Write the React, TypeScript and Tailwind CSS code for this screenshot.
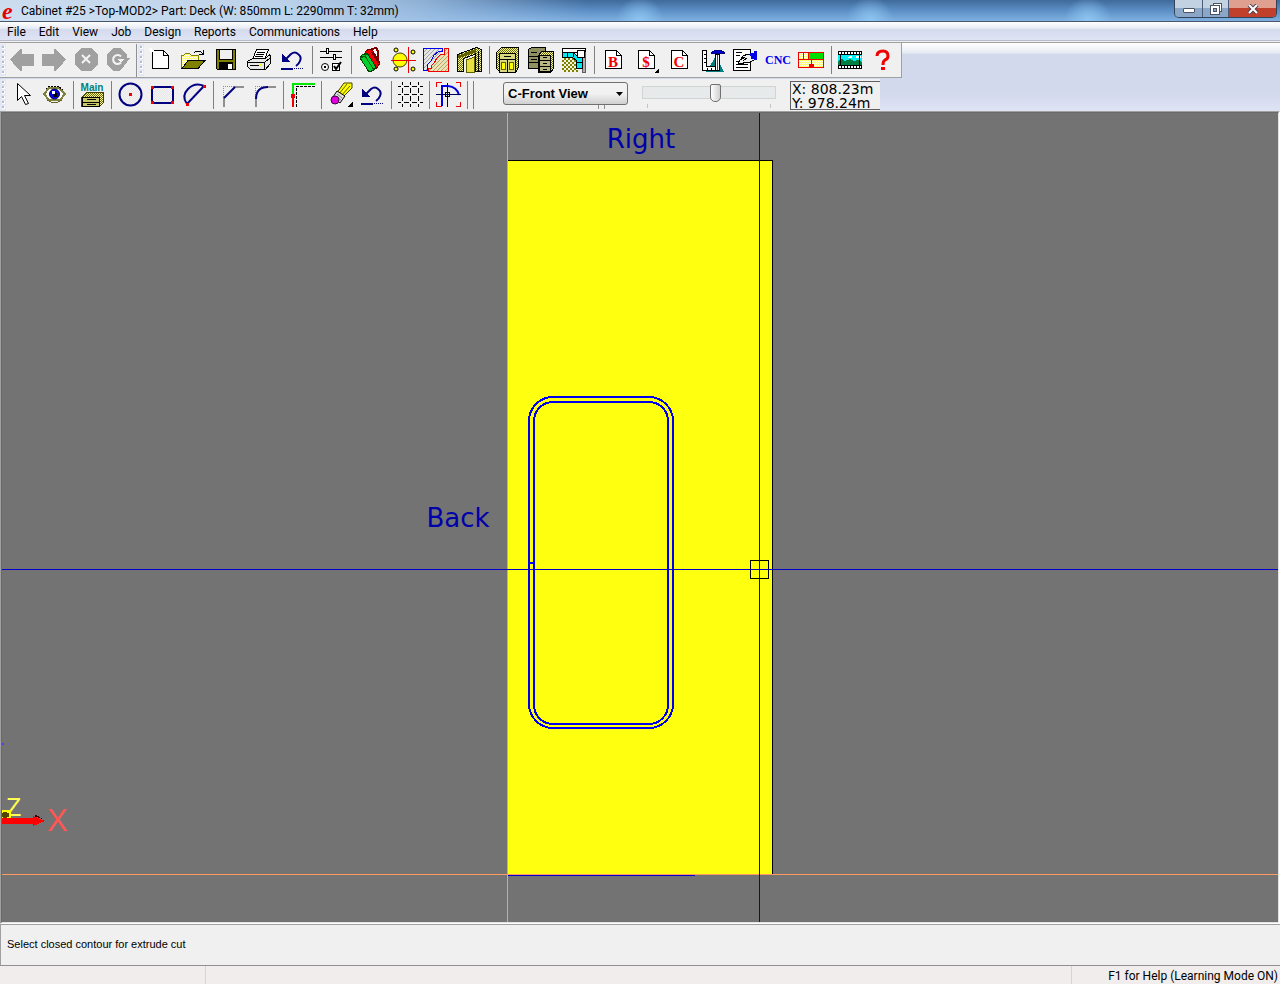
import clsx from "clsx";
import { ReactNode, useState } from "react";

const menus = [
	"File",
	"Edit",
	"View",
	"Job",
	"Design",
	"Reports",
	"Communications",
	"Help",
];

type ToolProps = {
	label: string;
	wide?: boolean;
	children: ReactNode;
};

// every glyph is drawn on a 32px grid
function Tool({ label, wide, children }: ToolProps) {
	return (
		<button
			type="button"
			aria-label={label}
			title={label}
			className={clsx(
				"flex h-8 shrink-0 items-center",
				wide ? "w-[33px]" : "w-8"
			)}
		>
			<svg
				viewBox="0 0 32 32"
				className="h-8 w-8"
				fill="none"
				shapeRendering="crispEdges"
			>
				{children}
			</svg>
		</button>
	);
}

function Separator() {
	return (
		<div className="flex h-8 w-[6px] shrink-0 justify-center py-[2px]">
			<div className="w-px bg-[#808080]" />
		</div>
	);
}

function Grip() {
	return (
		<div className="flex h-8 w-[6px] shrink-0 flex-col items-center justify-around bg-[#e3e8f4] py-px">
			{[0, 1, 2, 3, 4, 5].map((dot) => (
				<span
					key={dot}
					className="h-[3px] w-[3px] border-r border-b border-white bg-[#b4bccb]"
				/>
			))}
		</div>
	);
}

function Patterns() {
	return (
		<svg className="absolute h-0 w-0" aria-hidden="true">
			<defs>
				<pattern id="olive" width="2" height="2" patternUnits="userSpaceOnUse">
					<rect width="2" height="2" fill="#f4f4a0" />
					<path d="M0 0h1v1H0zM1 1h1v1H1z" fill="#6c6c00" />
				</pattern>
				<pattern id="lemon" width="2" height="2" patternUnits="userSpaceOnUse">
					<rect width="2" height="2" fill="#ffff66" />
					<path d="M0 0h1v1H0zM1 1h1v1H1z" fill="#fffff0" />
				</pattern>
				<pattern id="dither" width="2" height="2" patternUnits="userSpaceOnUse">
					<rect width="2" height="2" fill="#f4f4f4" />
					<path d="M0 0h1v1H0zM1 1h1v1H1z" fill="#e6e6e6" />
				</pattern>
				<pattern id="hatch" width="4" height="4" patternUnits="userSpaceOnUse">
					<rect width="4" height="4" fill="#e6e6e6" />
					<path d="M0 3h1v1H0zM1 2h1v1H1zM2 1h1v1H2zM3 0h1v1H3z" fill="#a0a0a0" />
				</pattern>
				<pattern id="wood" width="4" height="4" patternUnits="userSpaceOnUse">
					<rect width="4" height="4" fill="#e8e4b8" />
					<path d="M0 3h1v1H0zM1 2h1v1H1zM2 1h1v1H2zM3 0h1v1H3z" fill="#b8a460" />
				</pattern>
				<pattern id="checker" width="4" height="4" patternUnits="userSpaceOnUse">
					<rect width="4" height="4" fill="#f4f4e0" />
					<path d="M0 0h2v2H0zM2 2h2v2H2z" fill="#808000" />
				</pattern>
			</defs>
		</svg>
	);
}

function Sheet({ letter }: { letter?: string }) {
	return (
		<>
			<path d="M8.500 6.500h11l5 5v13h-16z" fill="#fff" stroke="#000" />
			<path d="M19.500 6.500v5h5" stroke="#000" />
			{letter && (
				<text
					x="16"
					y="23"
					textAnchor="middle"
					className="fill-[#f00000] font-['Liberation_Serif',serif] text-[15px] font-bold"
				>
					{letter}
				</text>
			)}
		</>
	);
}

function UndoGlyph() {
	return (
		<>
			<path
				d="M10 15l5-5q4-3 7 0q4 3 2 7q-1 3-4 5"
				stroke="#000080"
				strokeWidth="2"
				shapeRendering="auto"
			/>
			<path d="M6 10v8h8z" fill="#000080" />
			<path d="M5 24h12v2H5z" fill="#000080" />
			<path d="M18 24.500h9" stroke="#000080" strokeDasharray="1 1" />
		</>
	);
}

function MainToolbar() {
	return (
		<div className="flex h-[35px] w-[902px] border-r border-b border-[#a0a0a0] bg-[#f0f0f0] pt-px">
			<div className="flex w-[137px] border-r border-[#909090]">
				<Grip />
				<Tool label="Back">
					<path d="M4 15.500L14 5h2v5h12v12H16v5h-2z" fill="#a0a0a0" />
				</Tool>
				<Tool label="Forward">
					<path d="M28 15.500L18 5h-2v5H4v12h12v5h2z" fill="#a0a0a0" />
				</Tool>
				<Tool label="Stop">
					<path d="M11 4h10l7 7v9l-7 7H11l-6-7v-9z" fill="#a0a0a0" />
					<path d="M12 11l8 8M20 11l-8 8" stroke="#f4f4f4" strokeWidth="2" shapeRendering="auto" />
				</Tool>
				<Tool label="Refresh">
					<path d="M11 4h8l6 7v3h3l-6 8l-4 5h-7l-6-7v-9z" fill="#a0a0a0" />
					<path d="M19 12.500a4.500 4.500 0 1 0 0 6" stroke="#f4f4f4" strokeWidth="2" shapeRendering="auto" />
					<path d="M16 15h6l-3 4z" fill="#f4f4f4" />
				</Tool>
			</div>
			<div className="flex pl-px">
				<Grip />
				<Tool wide label="New">
					<Sheet />
					<path d="M5 6.500h5M7.500 4v5M5 4l5 5" stroke="#fff" />
				</Tool>
				<Tool wide label="Open">
					<path d="M4.500 24.500v-13h2l2-2h4l2 2h7v4" fill="url(#lemon)" stroke="#808000" />
					<path d="M5 24.500l6-8h17l-7 8z" fill="#808000" stroke="#000" />
					<path d="M17 9l2-2h4l3 3M26.500 6v4.500H22" stroke="#000" />
				</Tool>
				<Tool wide label="Save">
					<path d="M6.500 5.500h19v20h-18l-1-1z" fill="#808000" stroke="#000" />
					<rect x="10" y="6" width="12" height="9" fill="#f0f0f0" />
					<path d="M9.500 6v9.500h13V6" stroke="#000" />
					<rect x="9" y="18" width="14" height="8" fill="#000" />
					<rect x="18" y="20" width="4" height="5" fill="#fff" />
				</Tool>
				<Tool wide label="Print">
					<path d="M9.500 15.500l4-10h12l-4 10z" fill="#fff" stroke="#000" />
					<path d="M14 8.500h8M13 10.500h8M12 12.500h8" stroke="#000" />
					<path d="M4.500 17.500l5-3h13l4-4l1 2v7l-5 6h-15l-3-3z" fill="#e8e8e8" stroke="#000" />
					<path d="M4.500 18.500h17v7M21.500 18.500l6-5" stroke="#000" />
					<path d="M7 21.500h12" stroke="#000" />
					<rect x="16" y="20" width="3" height="2" fill="#ffff00" />
				</Tool>
				<Tool wide label="Undo">
					<UndoGlyph />
				</Tool>
				<Separator />
				<Tool wide label="Options">
					<path d="M5 7.500h22M5 13.500h22" stroke="#000" />
					<rect x="11.500" y="4.500" width="2" height="5" fill="#fff" stroke="#000" />
					<rect x="18.500" y="10.500" width="2" height="5" fill="#fff" stroke="#000" />
					<circle cx="10" cy="23" r="3.500" fill="#fff" stroke="#000" shapeRendering="auto" />
					<rect x="9" y="22" width="2" height="2" fill="#000" />
					<rect x="17.500" y="19.500" width="7" height="7" fill="#fff" stroke="#000" />
					<path d="M19 22l2 3l5-7" stroke="#000" strokeWidth="2" shapeRendering="auto" />
				</Tool>
				<Separator />
				<Tool wide label="Catalog">
					<path d="M16 8l2-3l4-1l2 3v8" fill="#fff" stroke="#800000" strokeWidth="2" />
					<path d="M11 8l4-3l4 2l7 12l-4 6z" fill="#f00000" stroke="#700000" />
					<path d="M18 8l7 11" stroke="#700000" strokeWidth="2" />
					<path d="M6 14l2-3l5-2l9 14l-2 3l-5 2z" fill="#00d030" stroke="#004000" />
					<path d="M6 14l5-2l9 14M11 12l2-3" stroke="#006010" />
				</Tool>
				<Tool wide label="Light">
					<circle cx="13" cy="16" r="7" fill="#ffff00" stroke="#404000" shapeRendering="auto" />
					<g fill="#ffff00" stroke="#000" shapeRendering="auto">
						<circle cx="9" cy="6" r="2" />
						<circle cx="9" cy="25" r="2" />
						<circle cx="26" cy="8" r="2" />
						<circle cx="26" cy="25" r="2" />
					</g>
					<path d="M4 16.500h25M21.500 3v26" stroke="#f00000" />
				</Tool>
				<Tool wide label="Profile">
					<path d="M3.500 4.500h21L15 17L3.500 26z" fill="url(#hatch)" />
					<path d="M8.500 27.500v-3h3v-3l3-3l2-4l4-4h4v-6h4v23z" fill="url(#wood)" stroke="#f00000" />
					<path d="M3.500 26.500v-22h19v3h-4l-5 4l-2 5l-4 4v6z" fill="url(#hatch)" stroke="#0000f0" />
				</Tool>
				<Tool wide label="Doors">
					<path d="M4.500 27.500v-17l19-7l5 2v22h-6V10L10.500 14.500v13z" fill="url(#olive)" stroke="#000" />
					<path d="M4 12l19-7v3L7 14z" fill="#606000" />
					<path d="M13.500 28V16l8-3v15z" fill="#e8e040" stroke="#606000" />
					<path d="M25.500 7v21" stroke="#000" />
				</Tool>
				<Separator />
				<Tool wide label="Base cabinet">
					<path d="M4.500 8.500l5-5h17v20l-3 5h-15l-4-4z" fill="url(#olive)" stroke="#000" />
					<rect x="7.500" y="9.500" width="16" height="19" fill="#d8d880" stroke="#000" />
					<path d="M7 15.500h17M15.500 16v12M12 12.500h7" stroke="#000" />
					<rect x="9.500" y="18.500" width="4" height="7" fill="#ffff00" stroke="#606000" />
					<rect x="17.500" y="18.500" width="4" height="7" fill="#ffff00" stroke="#606000" />
				</Tool>
				<Tool wide label="Cabinet group">
					<path d="M3.500 5.500l3-2h14v21h-17z" fill="#909060" stroke="#000" />
					<path d="M4 12.500h10M4 18.500h10M6 8.500h6M6 15.500h6" stroke="#000" />
					<path d="M13.500 11.500l3-4h12v17l-3 4h-12z" fill="url(#olive)" stroke="#000" />
					<rect x="14.500" y="11.500" width="11" height="16" fill="#b8b880" stroke="#000" />
					<path d="M14 16.500h12M14 22.500h12M18 13.500h4M18 19.500h4M18 25.500h4" stroke="#000" />
				</Tool>
				<Tool wide label="Counter top">
					<rect x="4" y="13" width="16" height="15" fill="url(#checker)" />
					<rect x="4.500" y="4.500" width="23" height="4" fill="#fff" stroke="#000" />
					<path d="M24.500 8v20h3V8" fill="#b0b0b0" stroke="#606060" />
					<path d="M4.500 8.500h11l4 4h5v12h-6v-8l-4-3h-10z" fill="#00e8f0" stroke="#000" />
					<rect x="19.500" y="6.500" width="7" height="7" fill="#fff" stroke="#000" />
					<path d="M9.500 9v4M15.500 9v4M18 18.500h6" stroke="#000" />
				</Tool>
				<Separator />
				<Tool wide label="Bill of materials">
					<Sheet letter="B" />
				</Tool>
				<Tool wide label="Price">
					<Sheet letter="$" />
					<path d="M29 24v5h-5z" fill="#000" />
				</Tool>
				<Tool wide label="Cut list">
					<Sheet letter="C" />
				</Tool>
				<Tool wide label="Shop drawings">
					<path d="M10 28L20 12l8 16z" fill="#008080" />
					<path d="M6.500 6.500h4v16h9v4h-13z" fill="#fff" stroke="#000" />
					<path d="M8 10.500h2M8 14.500h2M8 18.500h2M11.500 24v2M15.500 24v2" stroke="#000" />
					<path d="M15.500 8.500l3-2h6l4 2v1h-13z" fill="#0000d0" stroke="#000080" />
					<rect x="19.500" y="10.500" width="4" height="16" fill="#fff" stroke="#000" />
					<path d="M21.500 11v15" stroke="#f00000" />
				</Tool>
				<Tool wide label="Report setup">
					<path d="M4.500 5.500h17v21h-17z" fill="#fff" stroke="#000" />
					<path d="M7 8.500h6M7 11.500h4M7 17.500h6M7 20.500h12M7 23.500h12" stroke="#000" />
					<path d="M9 19l5-7l5-2l6 1v5l-4 2h-4l-5 2z" fill="#f0f0f0" stroke="#000" />
					<path d="M12 16l4-3M14 17l4-3" stroke="#000" />
					<path d="M21 9h4V7h3v9h-3v-1h-3z" fill="#0000e8" />
				</Tool>
				<Tool wide label="CNC">
					<text
						x="16"
						y="20"
						textAnchor="middle"
						className="fill-[#0000f0] font-['Liberation_Serif',serif] text-[12px] font-bold"
					>
						CNC
					</text>
				</Tool>
				<Tool wide label="Panel optimizer">
					<rect x="3.500" y="8.500" width="25" height="15" fill="url(#lemon)" stroke="#f00000" />
					<rect x="14" y="9" width="14" height="6" fill="#00e000" />
					<path d="M3 15.500h26M8.500 9v6M13.500 9v6M16.500 16v8" stroke="#f00000" />
					<rect x="14" y="20" width="5" height="3" fill="#f00000" />
				</Tool>
				<Separator />
				<Tool wide label="Movie">
					<rect x="4" y="7" width="24" height="18" fill="#000" />
					<path d="M5 8h22v2H5zM5 22h22v2H5z" fill="#fff" />
					<path d="M7.500 8v2M10.500 8v2M13.500 8v2M16.500 8v2M19.500 8v2M22.500 8v2M25.500 8v2M7.500 22v2M10.500 22v2M13.500 22v2M16.500 22v2M19.500 22v2M22.500 22v2M25.500 22v2" stroke="#000" />
					<rect x="4" y="11" width="24" height="10" fill="#00f0f8" />
					<path d="M4 21v-4l4-2l3 2l5-2l4 2l4-1l4 2v3z" fill="#008040" />
					<path d="M13 14h5v-2h-3zM22 12h5v2h-5z" fill="#fff" />
					<path d="M6.500 11v10M25.500 11v10" stroke="#000" />
				</Tool>
				<Tool wide label="Help">
					<path
						d="M10 12q0-5 6-5q5 0 5 5q0 3-3 4q-2 1-2 5"
						stroke="#f00000"
						strokeWidth="3"
						shapeRendering="auto"
					/>
					<rect x="14" y="23" width="4" height="3" fill="#f00000" />
				</Tool>
			</div>
		</div>
	);
}

function DrawToolbar() {
	const [zoom, setZoom] = useState(55);
	return (
		<div className="flex h-8 w-[880px] bg-[#f0f0f0]">
			<Grip />
			<Tool label="Select">
				<path d="M11.500 4.500v17l4-4l4 8l3-1l-4-8h6z" fill="#fff" stroke="#000" shapeRendering="auto" />
			</Tool>
			<Tool label="Look">
				<path d="M6 15l5-6h10l6 6l-5 6H11z" fill="#fff" stroke="#808040" strokeWidth="2" />
				<path d="M8 10l4-3h8l5 4" stroke="#000" strokeDasharray="2 1" />
				<circle cx="16.500" cy="15" r="5" fill="#0000e0" stroke="#000040" shapeRendering="auto" />
				<rect x="15" y="14" width="4" height="4" fill="#000" />
				<rect x="14" y="12" width="3" height="3" fill="#fff" />
				<path d="M9 21l4 2h7l4-2" stroke="#606020" />
			</Tool>
			<Separator />
			<Tool label="Main">
				<text
					x="16"
					y="12"
					textAnchor="middle"
					className="fill-[#008080] font-['Liberation_Sans',sans-serif] text-[10px] font-bold"
				>
					Main
				</text>
				<path d="M5.500 18.500l5-5h17v10l-4 4h-18z" fill="url(#olive)" stroke="#404000" />
				<rect x="6.500" y="18.500" width="17" height="9" fill="#c8c868" stroke="#000" />
				<path d="M6 23.500h17M10.500 20.500h9M10.500 25.500h9" stroke="#000" />
			</Tool>
			<Separator />
			<Tool label="Circle">
				<circle cx="16.500" cy="15.500" r="11" stroke="#000080" strokeWidth="2" fill="url(#dither)" shapeRendering="auto" />
				<rect x="15" y="14" width="3" height="3" fill="#f00000" />
			</Tool>
			<Tool label="Rectangle">
				<rect x="6" y="8" width="21" height="16" stroke="#000080" strokeWidth="2" fill="url(#dither)" />
				<path d="M5 7h3v3H5zM25 7h3v3h-3zM5 22h3v3H5zM25 22h3v3h-3z" fill="#f00000" />
			</Tool>
			<Tool label="Arc">
				<path d="M9 25Q3 17 10 10T26 7z" stroke="#000080" strokeWidth="2" fill="url(#dither)" shapeRendering="auto" />
				<path d="M25 6h3v3h-3zM8 24h3v3H8z" fill="#f00000" />
			</Tool>
			<Separator />
			<Tool label="Chamfer">
				<path d="M7.500 18V7.500H18" stroke="#909090" strokeDasharray="1 1" />
				<path d="M18 8h10M8 18v10" stroke="#909090" strokeWidth="2" />
				<path d="M8 19L19 8" stroke="#000080" strokeWidth="2" shapeRendering="auto" />
			</Tool>
			<Tool label="Fillet">
				<path d="M7.500 18V7.500H18" stroke="#909090" strokeDasharray="1 1" />
				<path d="M19 8h9M8 19v9" stroke="#909090" strokeWidth="2" />
				<path d="M8 20Q8 8 20 8" stroke="#000080" strokeWidth="2" shapeRendering="auto" />
			</Tool>
			<Separator />
			<Tool label="Corner">
				<path d="M6 4h23v2H8v10H6z" fill="#00e800" />
				<path d="M7 16v12" stroke="#f00000" strokeWidth="2" />
				<rect x="5" y="15" width="4" height="4" fill="#f00000" />
				<path d="M10.500 28V7.500H29" stroke="#000" strokeDasharray="3 1" />
			</Tool>
			<Separator />
			<Tool label="Erase">
				<path d="M12 15l8-11h8v5L17 20z" fill="#ffff00" stroke="#404000" shapeRendering="auto" />
				<path d="M15 15l8-10M17 17l9-10" stroke="#606000" shapeRendering="auto" />
				<path d="M9 18l4-6l8 5l-5 7z" fill="#e0e0e0" stroke="#000" shapeRendering="auto" />
				<path d="M13 15l5 4M12 17l5 4" stroke="#808080" shapeRendering="auto" />
				<circle cx="11" cy="21" r="4" fill="#e000e0" stroke="#400040" shapeRendering="auto" />
				<path d="M29 22v6h-6z" fill="#000" />
			</Tool>
			<Tool label="Undo step">
				<UndoGlyph />
			</Tool>
			<Separator />
			<Tool label="Grid">
				<path
					d="M4 7.500h25M4 15.500h25M4 23.500h25M8.500 3v25M16.500 3v25M24.500 3v25"
					stroke="#000"
					strokeDasharray="5 3"
					strokeDashoffset="2"
				/>
			</Tool>
			<Separator />
			<Tool label="Snap">
				<path d="M4.500 8V3.500h5M24 3.500h4.500V8M4.500 23v4.500h5M24 27.500h4.500V23" stroke="#f00000" />
				<path d="M10 27V7h6q9 1 11 9" stroke="#0000e0" strokeWidth="2" shapeRendering="auto" />
				<path d="M4 15.500h25M15.500 4v24" stroke="#000060" />
				<rect x="13.500" y="13.500" width="4" height="4" stroke="#000" />
			</Tool>
			<Separator />
			<Separator />
			<div className="w-[27px]" />
			<div className="w-[125px] pt-[3px]">
				<div className="relative">
					<select
						aria-label="View"
						defaultValue="C-Front View"
						className="h-[23px] w-full appearance-none rounded-[3px] border border-[#707070] bg-linear-to-b from-[#f2f2f2] from-50% to-[#d0d0d0] pl-1 font-['Liberation_Sans',sans-serif] text-[13px] leading-4 font-bold text-black outline-none"
					>
						<option>C-Front View</option>
						<option>Top View</option>
					</select>
					<svg viewBox="0 0 7 4" className="absolute top-[10px] right-[5px] h-1 w-[7px]">
						<path d="M0 0h7L3.500 4z" />
					</svg>
				</div>
				<div className="ml-[95px] h-1 w-[7px] border-x border-[#909090]" />
			</div>
			<div className="ml-[14px] w-[134px] pt-[3px]">
				<input
					type="range"
					aria-label="Zoom"
					value={zoom}
					onChange={(event) => setZoom(Number(event.target.value))}
					className="block h-5 w-full appearance-none bg-transparent outline-none [&::-webkit-slider-runnable-track]:h-[13px] [&::-webkit-slider-runnable-track]:border [&::-webkit-slider-runnable-track]:border-[#d0d4d4] [&::-webkit-slider-runnable-track]:bg-[#e7eaea] [&::-webkit-slider-thumb]:-mt-[3px] [&::-webkit-slider-thumb]:h-[18px] [&::-webkit-slider-thumb]:w-[11px] [&::-webkit-slider-thumb]:appearance-none [&::-webkit-slider-thumb]:rounded-t-[2px] [&::-webkit-slider-thumb]:rounded-b-[5px] [&::-webkit-slider-thumb]:border [&::-webkit-slider-thumb]:border-[#707070] [&::-webkit-slider-thumb]:bg-linear-to-r [&::-webkit-slider-thumb]:from-white [&::-webkit-slider-thumb]:to-[#d0d0d0]"
				/>
				<div className="mx-[5px] mt-[2px] h-1 border-x border-[#c4c4c4]" />
			</div>
			<div className="ml-[14px] h-[29px] w-[90px] self-center overflow-hidden border border-r-0 border-[#606060] pl-px font-['DejaVu_Sans',sans-serif] text-[14px] leading-[14px] whitespace-nowrap text-black">
				<p>X: 808.23m</p>
				<p>Y: 978.24m</p>
			</div>
		</div>
	);
}

function Drawing() {
	return (
		<svg className="h-full w-full" shapeRendering="crispEdges" fill="none">
			<rect x="506" y="48" width="264" height="714" fill="#ffff10" />
			<path d="M506 47.500h264.500V762" stroke="#000" />

			{/* origin lines */}
			<line x1="0" x2="100%" y1="761.5" y2="761.5" stroke="#ff9a62" />
			<line x1="505.5" x2="505.5" y1="0" y2="100%" stroke="#ff9a62" />
			<path d="M506 762.500h187" stroke="#0000c8" />

			{/* cut-out contour */}
			<g stroke="#0000f0" strokeWidth="2">
				<rect x="527" y="284" width="144" height="331" rx="24" />
				<rect x="532" y="289" width="134" height="322" rx="19" />
				<path d="M527 450h5" />
			</g>

			{/* cursor */}
			<rect x="748.5" y="447.500" width="18" height="18" stroke="#000" />
			<g stroke="#0000c8">
				<line x1="0" x2="100%" y1="456.5" y2="456.5" />
				<line x1="757.5" x2="757.5" y1="0" y2="100%" />
			</g>

			<g
				textAnchor="middle"
				className="fill-[#0000aa] font-['DejaVu_Sans',sans-serif] text-[26px]"
			>
				<text x="639" y="35">Right</text>
				<text x="456" y="414">Back</text>
			</g>

			{/* axis marker */}
			<path d="M0 630h2v2H0z" fill="#4444ff" />
			<text x="4" y="703" className="fill-[#ffff55] font-['Liberation_Sans',sans-serif] text-[25px]">
				Z
			</text>
			<path d="M0 697h9v8H0z" fill="#ffff00" />
			<ellipse cx="3" cy="702" rx="4" ry="3" fill="#504800" />
			<path d="M31 703l3-1l9 5z" fill="#400000" />
			<path d="M0 705h31v-2l12 5l-12 5v-2H0z" fill="#ff0000" />
			<text x="45" y="718" className="fill-[#ff5555] font-['Liberation_Sans',sans-serif] text-[31px]">
				X
			</text>
		</svg>
	);
}

export default function App() {
	return (
		<div className="flex min-h-screen flex-col bg-[#f0f0f0] font-['Roboto',sans-serif] text-[12px] leading-4 text-black">
			<Patterns />
			<header className="flex h-[22px] justify-between border-b border-[#45566e] bg-[linear-gradient(90deg,#d4e3f3f0_0%,#c3d8eef0_22%,#a8c6e6c0_33%,#7fb0e000_46%),radial-gradient(circle_at_50%_100%,#8cc4f0_0,#8cc4f000_24px),radial-gradient(circle_at_68%_100%,#8cc4f0_0,#8cc4f000_24px),radial-gradient(circle_at_85%_100%,#8cc4f0_0,#8cc4f000_24px),linear-gradient(180deg,#3f6a9b,#5c8fc6_50%,#7fb0e0)] pr-[3px]">
				<div className="flex items-center pl-[2px]">
					<span className="w-[19px] font-['Liberation_Serif',serif] text-[24px] leading-5 font-bold text-[#e80000] italic">
						e
					</span>
					<h1>Cabinet #25 &gt;Top-MOD2&gt; Part: Deck (W: 850mm L: 2290mm T: 32mm)</h1>
				</div>
				<div className="flex h-[18px] rounded-b-[5px] border border-t-0 border-[#33435a] text-white">
					<button
						type="button"
						aria-label="Minimize"
						className="flex w-[27px] items-center justify-center rounded-bl-[4px] bg-linear-to-b from-[#c3d2e2] from-50% to-[#8ba6c6] to-50% pt-1"
					>
						<span className="h-[5px] w-3 rounded-[1px] border border-[#4a5466] bg-white" />
					</button>
					<button
						type="button"
						aria-label="Restore"
						className="flex w-[27px] items-center justify-center border-x border-[#4a5c78] bg-linear-to-b from-[#c3d2e2] from-50% to-[#8ba6c6] to-50%"
					>
						<svg viewBox="0 0 12 12" className="h-3 w-3" shapeRendering="crispEdges">
							<path d="M3.500 .5h8v8h-8z" fill="#fff" stroke="#4a5466" />
							<path d="M.5 2.500h9v9h-9z" fill="#fff" stroke="#4a5466" />
							<path d="M3.500 5.500h3v3h-3z" fill="#8ba6c6" stroke="#4a5466" />
						</svg>
					</button>
					<button
						type="button"
						aria-label="Close"
						className="flex w-[47px] items-center justify-center rounded-br-[4px] bg-linear-to-b from-[#e0a090] from-50% to-[#c0402c] to-50%"
					>
						<svg viewBox="0 0 12 10" className="h-[10px] w-3">
							<path d="M2 1l8 8M10 1L2 9" stroke="#4a4050" strokeWidth="4" />
							<path d="M2 1l8 8M10 1L2 9" stroke="#fff" strokeWidth="2" />
						</svg>
					</button>
				</div>
			</header>

			<nav className="flex h-[19px] items-center gap-[13px] border-b border-[#b6bccc] bg-[linear-gradient(180deg,#ffffff,#e6eaf3_36%,#d4daec_37%,#dfe4f5)] pt-px pl-[7px]">
				{menus.map((menu) => (
					<button key={menu} type="button">
						{menu}
					</button>
				))}
			</nav>

			<div className="mt-px flex flex-col gap-px border-t border-[#a0a0a0] bg-[linear-gradient(180deg,#ffffff,#e6eaf3_15%,#d3d9ec_16%,#d3d9ec_75%,#dfe4f5)]">
				<MainToolbar />
				<DrawToolbar />
			</div>

			<main className="flex flex-1 border border-t-[#a0a0a0] border-r-white border-b-white border-l-[#a0a0a0]">
				<div className="flex min-h-[400px] flex-1 overflow-hidden border border-t-[#696969] border-r-[#e3e3e3] border-b-[#e3e3e3] border-l-[#696969] bg-[#737373]">
					<Drawing />
				</div>
			</main>

			<div className="flex h-[41px] items-center border-t border-l border-[#a0a0a0] pb-[2px] pl-[6px] font-['Liberation_Sans',sans-serif] text-[11px]">
				Select closed contour for extrude cut
			</div>
			<footer className="flex h-[19px] items-center border-t border-[#909090] bg-[#f0edec]">
				<div className="h-full w-[206px] border-r border-[#d4d4d4]" />
				<div className="h-full flex-1 border-r border-[#d4d4d4]" />
				<div className="w-[208px] pt-[2px] pr-[2px] text-right whitespace-nowrap">
					F1 for Help (Learning Mode ON)
				</div>
			</footer>
		</div>
	);
}
